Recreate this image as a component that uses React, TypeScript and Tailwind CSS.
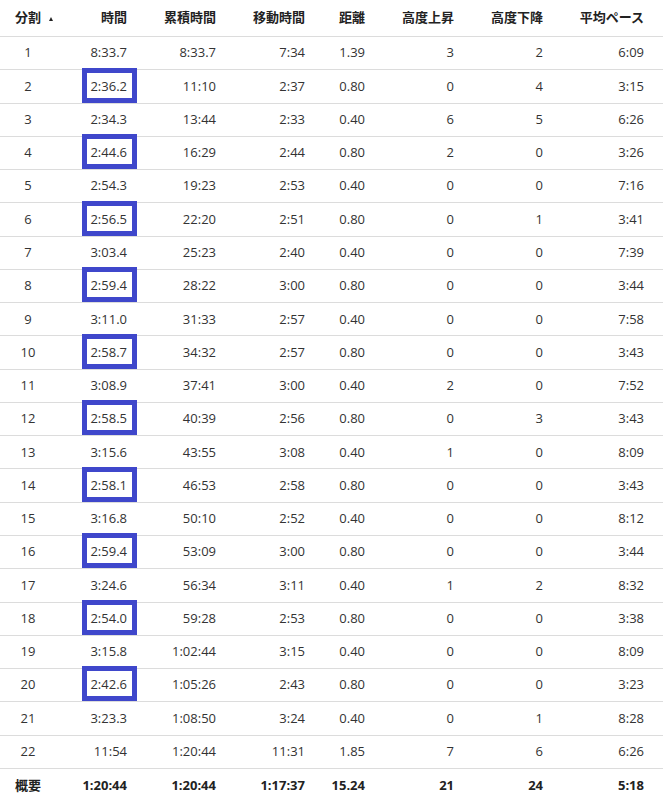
import React from "react";

type Row = [string, string, string, string, string, string, string, string];

const rows: Row[] = [
  ["1", "8:33.7", "8:33.7", "7:34", "1.39", "3", "2", "6:09"],
  ["2", "2:36.2", "11:10", "2:37", "0.80", "0", "4", "3:15"],
  ["3", "2:34.3", "13:44", "2:33", "0.40", "6", "5", "6:26"],
  ["4", "2:44.6", "16:29", "2:44", "0.80", "2", "0", "3:26"],
  ["5", "2:54.3", "19:23", "2:53", "0.40", "0", "0", "7:16"],
  ["6", "2:56.5", "22:20", "2:51", "0.80", "0", "1", "3:41"],
  ["7", "3:03.4", "25:23", "2:40", "0.40", "0", "0", "7:39"],
  ["8", "2:59.4", "28:22", "3:00", "0.80", "0", "0", "3:44"],
  ["9", "3:11.0", "31:33", "2:57", "0.40", "0", "0", "7:58"],
  ["10", "2:58.7", "34:32", "2:57", "0.80", "0", "0", "3:43"],
  ["11", "3:08.9", "37:41", "3:00", "0.40", "2", "0", "7:52"],
  ["12", "2:58.5", "40:39", "2:56", "0.80", "0", "3", "3:43"],
  ["13", "3:15.6", "43:55", "3:08", "0.40", "1", "0", "8:09"],
  ["14", "2:58.1", "46:53", "2:58", "0.80", "0", "0", "3:43"],
  ["15", "3:16.8", "50:10", "2:52", "0.40", "0", "0", "8:12"],
  ["16", "2:59.4", "53:09", "3:00", "0.80", "0", "0", "3:44"],
  ["17", "3:24.6", "56:34", "3:11", "0.40", "1", "2", "8:32"],
  ["18", "2:54.0", "59:28", "2:53", "0.80", "0", "0", "3:38"],
  ["19", "3:15.8", "1:02:44", "3:15", "0.40", "0", "0", "8:09"],
  ["20", "2:42.6", "1:05:26", "2:43", "0.80", "0", "0", "3:23"],
  ["21", "3:23.3", "1:08:50", "3:24", "0.40", "0", "1", "8:28"],
  ["22", "11:54", "1:20:44", "11:31", "1.85", "7", "6", "6:26"],
];

const summary: Row = ["概要", "1:20:44", "1:20:44", "1:17:37", "15.24", "21", "24", "5:18"];

const headers = ["時間", "累積時間", "移動時間", "距離", "高度上昇", "高度下降", "平均ペース"];

const gridCols =
  "grid grid-cols-[56px_71px_89px_89px_60px_89px_89px_101px] pr-[19px]";

function Cells({ r, boxed }: { r: Row; boxed: boolean }) {
  return (
    <>
      <div className="text-center">{r[0]}</div>
      {r.slice(1).map((v, i) => (
        <div key={i} className="text-right relative">
          {i === 0 && boxed && (
            <div className="absolute left-[26px] top-[-9px] w-[55px] h-[35px] border-[5px] border-[#3f47cb]" />
          )}
          {v}
        </div>
      ))}
    </>
  );
}

export default function App() {
  return (
    <div
      className="w-[663px] h-[803px] bg-white text-[#333] text-[13px] overflow-hidden"
      style={{ fontFamily: "'Open Sans', 'Noto Sans CJK JP', sans-serif" }}
    >
      <div
        className={`${gridCols} h-[37px] items-center border-b border-[#dcdcdc] font-bold text-[#222]`}
      >
        <div className="relative text-center">
          分割
          <span className="absolute left-[49px] top-[9px] w-0 h-0 border-l-[2.5px] border-r-[2.5px] border-b-[4px] border-l-transparent border-r-transparent border-b-[#222]" />
        </div>
        {headers.map((h) => (
          <div key={h} className="text-right">
            {h}
          </div>
        ))}
      </div>
      {rows.map((r, idx) => (
        <div
          key={idx}
          className={`${gridCols} h-[33.27px] items-center border-b border-[#dcdcdc]`}
        >
          <Cells r={r} boxed={idx % 2 === 1 && idx < 20} />
        </div>
      ))}
      <div className={`${gridCols} h-[34px] items-center font-bold text-[#222]`}>
        <Cells r={summary} boxed={false} />
      </div>
    </div>
  );
}
